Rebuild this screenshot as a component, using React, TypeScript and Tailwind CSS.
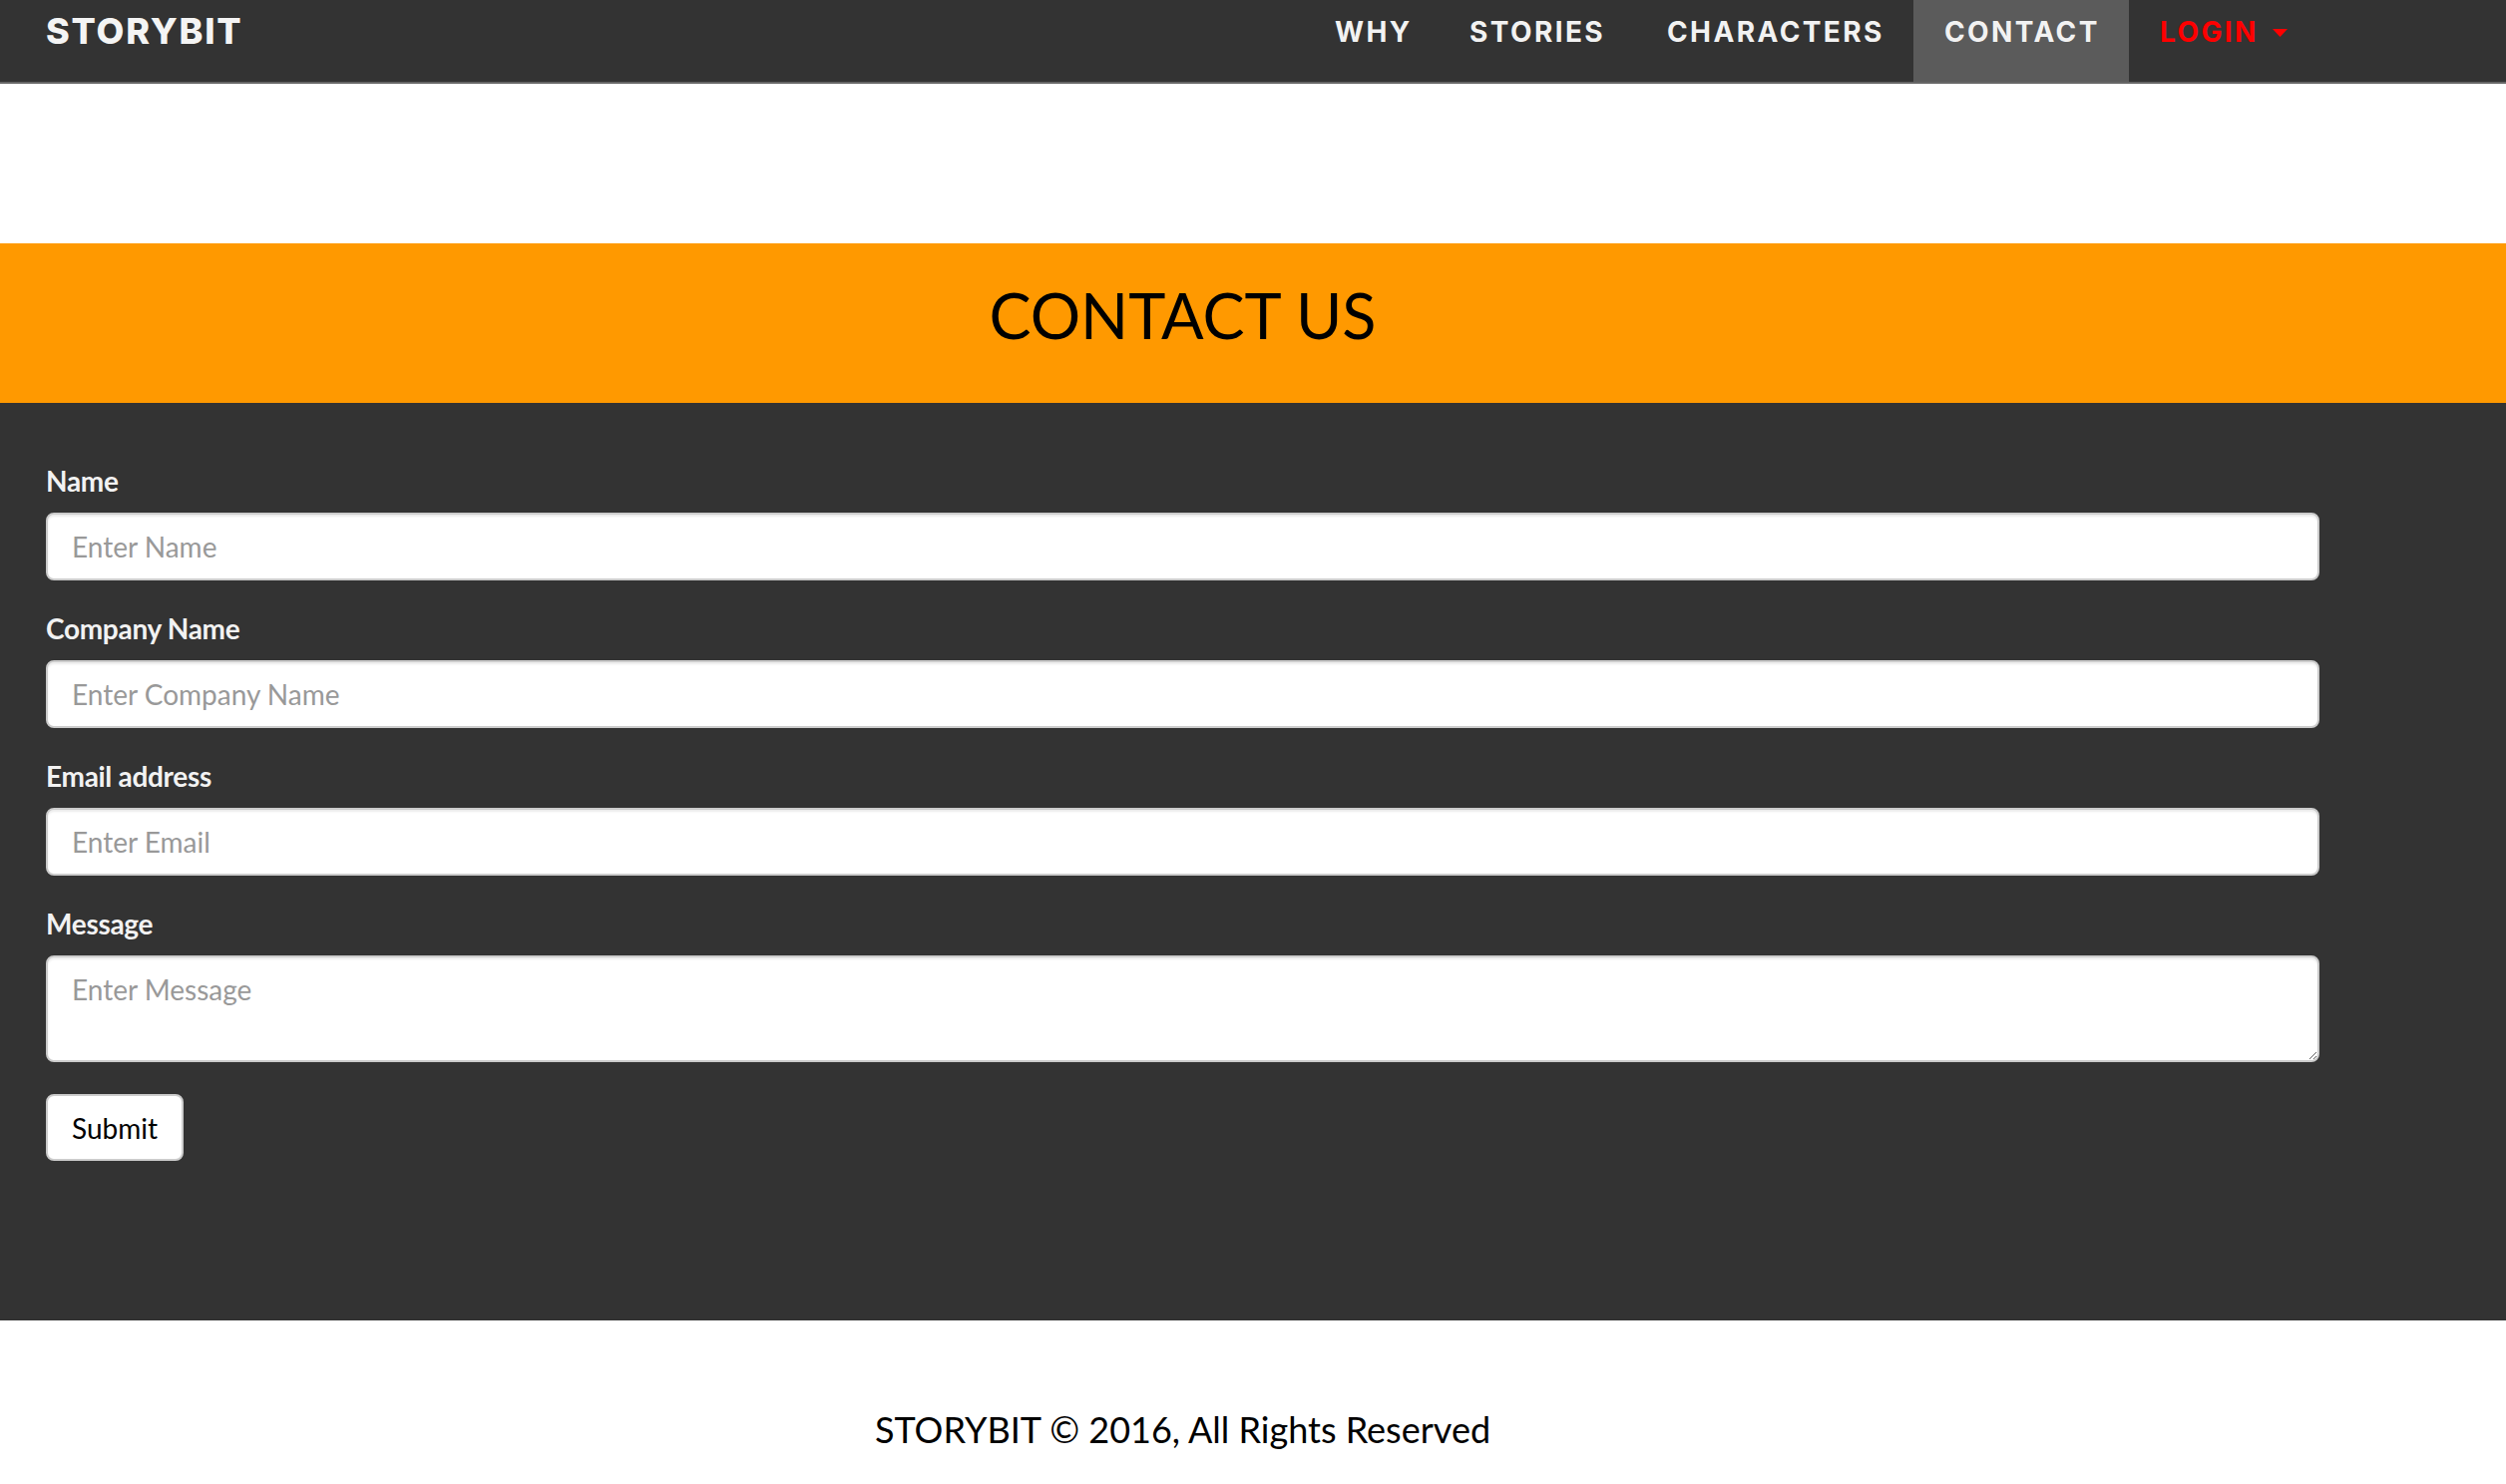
import React from "react";

const navItems = [
  { label: "WHY", w: "w-[135px]", active: false },
  { label: "STORIES", w: "w-[198px]", active: false },
  { label: "CHARACTERS", w: "w-[278px]", active: false },
  { label: "CONTACT", w: "w-[216px]", active: true },
];

function Field({ label, placeholder }: { label: string; placeholder: string }) {
  return (
    <div className="mb-[28px] flex flex-col">
      <label className="mb-[11px] text-[28px] font-bold leading-[41px] tracking-[-0.3px] text-[#f2f2f2]">{label}</label>
      <input
        type="text"
        placeholder={placeholder}
        className="h-[68px] w-full rounded-[8px] border-2 border-[#cccccc] bg-white px-[24px] text-[28px] leading-[40px] text-[#555] shadow-[inset_0_2px_2px_rgba(0,0,0,0.075)] outline-none placeholder:text-[#999999]"
      />
    </div>
  );
}

export default function App() {
  return (
    <div className="min-h-screen w-full bg-white font-['Lato',_'Liberation_Sans',_sans-serif]">
      {/* Navbar */}
      <nav className="h-[84px] w-full border-b-2 border-[#666666] bg-[#333333]">
        <div className="ml-[46px] flex h-[82px] w-[2279px] items-start">
          <div className="pt-[13px] font-['Inter',_sans-serif] text-[36px] font-extrabold leading-[36px] tracking-[1.8px] text-[#f4f4f4]">
            STORYBIT
          </div>
          <ul className="ml-auto flex h-[82px]">
            {navItems.map((it) => (
              <li
                key={it.label}
                className={`${it.w} h-[82px] pl-[31px] pt-[18px] font-['Inter',_sans-serif] text-[28px] font-bold leading-[28px] tracking-[2.4px] text-[#f2f2f2] ${
                  it.active ? "bg-[#5b5b5b]" : ""
                }`}
              >
                {it.label}
              </li>
            ))}
            <li className="flex h-[82px] w-[191px] items-start pl-[31px] pt-[18px] font-['Inter',_sans-serif] text-[28px] font-bold leading-[28px] tracking-[2.4px] text-[#ff0000]">
              <span>LOGIN</span>
              <svg className="ml-[14px] mt-[11px]" width="15" height="8" viewBox="0 0 15 8">
                <polygon points="0,0 15,0 7.5,8" fill="#ff0000" />
              </svg>
            </li>
          </ul>
        </div>
      </nav>

      {/* spacer */}
      <div className="h-[160px] w-full bg-white" />

      {/* Orange band */}
      <div className="h-[160px] w-full bg-[#ff9900] pt-[40px]">
        <h1 className="ml-[46px] w-[2279px] text-center text-[63px] font-normal leading-[63px] text-black">
          CONTACT US
        </h1>
      </div>

      {/* Form */}
      <section className="w-full bg-[#333333] pb-[160px] pt-[58px]">
        <form className="ml-[46px] w-[2279px]" onSubmit={(e) => e.preventDefault()}>
          <Field label="Name" placeholder="Enter Name" />
          <Field label="Company Name" placeholder="Enter Company Name" />
          <Field label="Email address" placeholder="Enter Email" />
          <div className="mb-[32px] flex flex-col">
            <label className="mb-[11px] text-[28px] font-bold leading-[41px] tracking-[-0.3px] text-[#f2f2f2]">Message</label>
            <textarea
              placeholder="Enter Message"
              className="block h-[107px] w-full rounded-[8px] border-2 border-[#cccccc] bg-white px-[24px] py-[12px] text-[28px] leading-[40px] text-[#555] shadow-[inset_0_2px_2px_rgba(0,0,0,0.075)] outline-none placeholder:text-[#999999]"
            />
          </div>
          <button
            type="submit"
            className="h-[67px] rounded-[8px] border-2 border-[#cccccc] bg-white px-[24px] text-[28px] leading-[40px] text-black"
          >
            Submit
          </button>
        </form>
      </section>

      {/* Footer */}
      <footer className="h-[163px] w-full bg-white pt-[91px]">
        <p className="ml-[46px] w-[2279px] text-center text-[36px] leading-[36px] text-black">
          STORYBIT © 2016, All Rights Reserved
        </p>
      </footer>
    </div>
  );
}
